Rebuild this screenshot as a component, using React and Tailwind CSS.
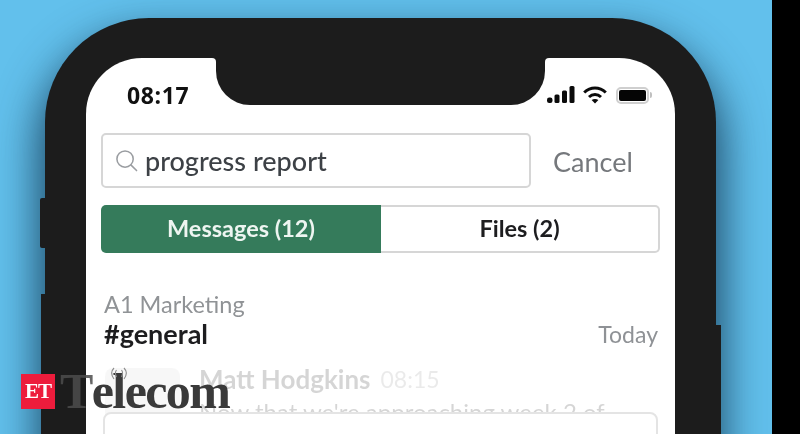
function SearchIcon() {
  return (
    <svg width="23" height="23" viewBox="0 0 24 24" fill="none" stroke="#9a9da1" strokeWidth="1.6" strokeLinecap="round">
      <circle cx="10.5" cy="10.5" r="8.5" />
      <path d="M16.8 16.8 L22.5 22.5" />
    </svg>
  );
}

function StatusIcons() {
  return (
    <div className="flex items-center">
      {/* signal */}
      <svg width="28" height="18" viewBox="0 0 28 18" fill="#0b0b0b" className="mr-[8px]">
        <rect x="0" y="11.5" width="5.5" height="5.5" rx="2.2" />
        <rect x="7.5" y="8.5" width="5" height="8.5" rx="1.5" />
        <rect x="15" y="4.5" width="5" height="12.5" rx="1.5" />
        <rect x="22.5" y="0" width="5" height="17" rx="1.5" />
      </svg>
      {/* wifi */}
      <svg width="24" height="18" viewBox="0 0 24 18" fill="none" stroke="#0b0b0b" strokeWidth="3" className="mr-[9px]">
        <path d="M1.2 6.5 C7.5 0.6 16.5 0.6 22.8 6.5" />
        <path d="M6 11 C9.5 7.8 14.5 7.8 18 11" />
        <path d="M12 17.6 L8.6 13.9 C10.6 12.6 13.4 12.6 15.4 13.9 Z" fill="#0b0b0b" stroke="none" />
      </svg>
      {/* battery */}
      <div className="flex items-center">
        <div className="w-[33px] h-[17px] rounded-[5px] border-2 border-[#cfcfcf] p-[1px]">
          <div className="w-full h-full bg-[#050505] rounded-[2px]" />
        </div>
        <div className="ml-[1px] w-[2px] h-[6px] bg-[#c0c0c0] rounded-r-sm" />
      </div>
    </div>
  );
}

function Logo() {
  return (
    <div className="absolute left-[21px] top-[374px] flex items-start">
      <div className="w-[34px] h-[35px] bg-[#ed1c3c] flex items-center justify-center text-white text-[21px] font-bold tracking-[-1px] font-['Liberation_Serif',serif]">
        ET
      </div>
      <div className="relative ml-[5px] -mt-[6px] flex font-['Liberation_Serif',serif] font-bold text-[50px] leading-[46px] tracking-[-1.6px] text-[#3a3a3a]">
        <span className="text-[#4c4c4c]/85">T</span>
        <span>elecom</span>
        {/* antenna waves over the l */}
        <svg width="20" height="16" viewBox="0 0 20 16" fill="none" stroke="#8c8c8c" strokeWidth="1.1" className="absolute left-[49px] -top-[1px]">
          <path d="M5 1 C2 4 2 8 5 12" />
          <path d="M7.5 3 C6 5 6 7 7.5 10" />
          <path d="M15 1 C18 4 18 8 15 12" />
          <path d="M12.5 3 C14 5 14 7 12.5 10" />
        </svg>
      </div>
    </div>
  );
}

export default function App() {
  return (
    <div className="relative w-[800px] h-[434px] overflow-hidden flex blur-[0.4px] font-['Lato',sans-serif]">
      <div className="w-[772px] h-full bg-[#62c0ec] pt-[18px] pl-[45px]">
        {/* Phone */}
        <div className="relative w-[671px] h-[500px] bg-[#1c1c1c] rounded-t-[104px] pt-[40px] px-[41px] shadow-[0_24px_44px_6px_rgba(10,40,65,0.8)]">
          {/* side buttons */}
          <div className="absolute -left-[5px] top-[180px] w-[5px] h-[50px] bg-[#1c1c1c] rounded-l-[2px]" />
          <div className="absolute -left-[4px] top-[276px] w-[4px] h-[200px] bg-[#1c1c1c]" />
          <div className="absolute -right-[5px] top-[307px] w-[5px] h-[200px] bg-[#1c1c1c]" />

          {/* Screen */}
          <div className="relative w-[589px] h-[460px] bg-white rounded-t-[56px]">
            {/* Notch */}
            <div className="absolute left-[130px] top-0 w-[329px] h-[47px] bg-[#1c1c1c] rounded-b-[34px]" />
            <div className="absolute left-[126px] top-0 w-[4px] h-[5px] bg-[#1c1c1c]">
              <div className="w-full h-full bg-white rounded-tr-[4px]" />
            </div>
            <div className="absolute left-[459px] top-0 w-[4px] h-[5px] bg-[#1c1c1c]">
              <div className="w-full h-full bg-white rounded-tl-[4px]" />
            </div>

            {/* Status bar */}
            <div className="flex items-center justify-between h-[74px] pl-[41px] pr-[23px]">
              <span className="text-[#111] text-[23px] font-bold tracking-[0.6px] font-['Open_Sans',sans-serif]">08:17</span>
              <StatusIcons />
            </div>

            {/* Search */}
            <div className="flex items-center pl-[15px] mt-[1px]">
              <div className="w-[430px] h-[55px] border-2 border-[#d6d6d6] rounded-[5px] flex items-center pl-[12px] gap-[7px]">
                <SearchIcon />
                <span className="text-[27px] text-[#3d4146] font-medium mt-[2px]">progress report</span>
              </div>
              <span className="ml-[22px] text-[27px] text-[#75787c] mt-[3px]">Cancel</span>
            </div>

            {/* Tabs */}
            <div className="ml-[15px] mt-[17px] w-[559px] h-[48px] flex">
              <div className="w-[280px] rounded-l-[5px] bg-[#357b5b] flex items-center justify-center text-[23.5px] font-bold text-[#eef5f1]">
                Messages (12)
              </div>
              <div className="flex-1 border-2 border-l-0 border-[#d6d6d6] rounded-r-[5px] flex items-center justify-center text-[23.5px] font-bold text-[#1d1d1f]">
                Files (2)
              </div>
            </div>

            {/* Channel header */}
            <div className="mt-[37px] pl-[18px] pr-[17px]">
              <div className="text-[23.5px] leading-[28px] text-[#909396]">A1 Marketing</div>
              <div className="flex items-center justify-between">
                <span className="text-[27px] leading-[30px] font-bold text-[#1d1d1f]">#general</span>
                <span className="text-[23px] leading-[32px] text-[#8f9296]">Today</span>
              </div>
            </div>

            <div className="mt-[13px] pl-[19px] flex gap-[19px] opacity-20">
              <div className="mt-[5px] w-[75px] h-[75px] bg-[#dcdcdc] rounded-[8px] shrink-0" />
              <div>
                <div className="flex items-center gap-[10px]">
                  <span className="text-[26px] leading-[32px] font-bold text-[#333]">Matt Hodgkins</span>
                  <span className="text-[23px] leading-[32px] text-[#999]">08:15</span>
                </div>
                <div className="text-[24px] text-[#333] leading-[30px] mt-[2px] whitespace-nowrap">Now that we're approaching week 2 of</div>
              </div>
            </div>
            <div className="absolute left-[17px] top-[354px] w-[555px] h-[60px] bg-white border-2 border-[#e4e4e4] rounded-[8px]" />
          </div>
        </div>
        <Logo />
      </div>
      <div className="flex-1 bg-black" />
    </div>
  );
}
